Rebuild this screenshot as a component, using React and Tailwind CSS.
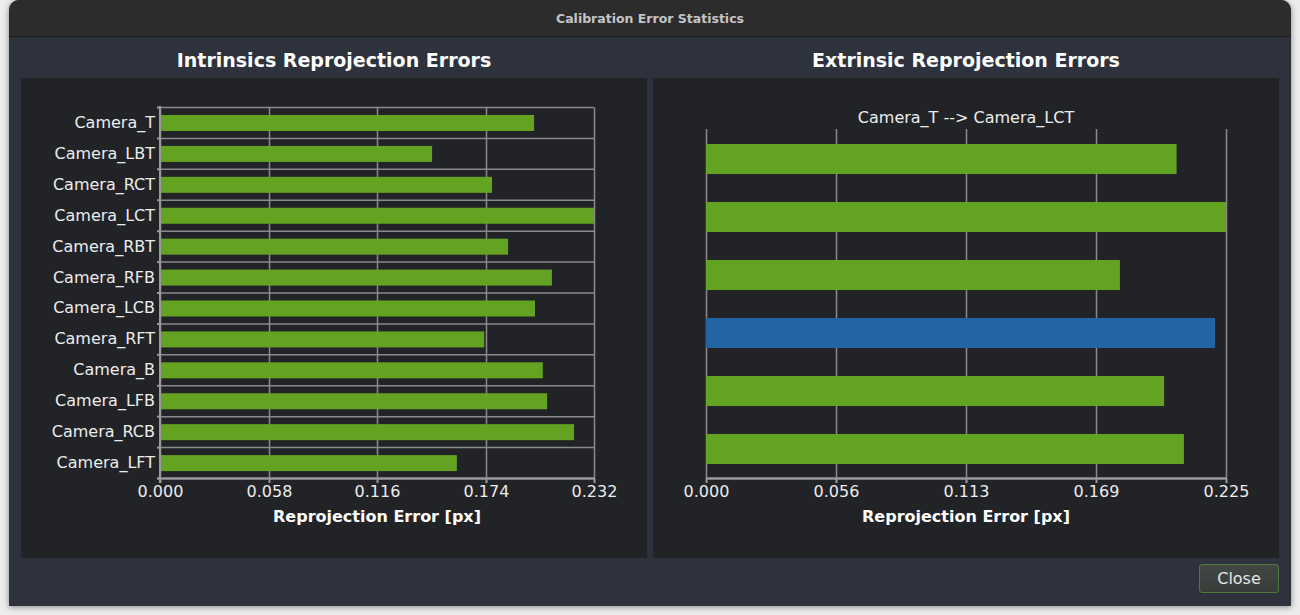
import React from "react";

const intrinsics = [
  { name: "Camera_T", value: 0.862 },
  { name: "Camera_LBT", value: 0.627 },
  { name: "Camera_RCT", value: 0.765 },
  { name: "Camera_LCT", value: 1.0 },
  { name: "Camera_RBT", value: 0.802 },
  { name: "Camera_RFB", value: 0.903 },
  { name: "Camera_LCB", value: 0.864 },
  { name: "Camera_RFT", value: 0.747 },
  { name: "Camera_B", value: 0.882 },
  { name: "Camera_LFB", value: 0.892 },
  { name: "Camera_RCB", value: 0.954 },
  { name: "Camera_LFT", value: 0.684 },
];

const extrinsics = [
  { value: 0.905, color: "#64a322" },
  { value: 1.0, color: "#64a322" },
  { value: 0.796, color: "#64a322" },
  { value: 0.979, color: "#2165a5" },
  { value: 0.881, color: "#64a322" },
  { value: 0.919, color: "#64a322" },
];

const GRID = "#8a8a8a";
const AXIS = "#9a9a9a";
const GREEN = "#64a322";
const TEXT = "#ececec";

function IntrinsicsChart() {
  const left = 139;
  const width = 434;
  const top = 29.5;
  const bottom = 400.5;
  const rowH = (bottom - top) / intrinsics.length;
  const ticks = ["0.000", "0.058", "0.116", "0.174", "0.232"];

  return (
    <svg width="626" height="480" className="block">
      {/* vertical grid */}
      {ticks.map((t, i) => {
        const x = Math.round(left + (width * i) / 4) + 0.5;
        return (
          <g key={t}>
            <line x1={x} y1={top} x2={x} y2={bottom} stroke={GRID} strokeWidth="1.5" />
            <line x1={x} y1={bottom} x2={x} y2={bottom + 4.5} stroke={AXIS} strokeWidth="2" />
            <text x={x} y={419} textAnchor="middle" fontSize="16" fill={TEXT}>
              {t}
            </text>
          </g>
        );
      })}

      {/* horizontal grid + left ticks */}
      {intrinsics.map((_, i) => {
        const y = top + rowH * i;
        return (
          <g key={i}>
            <line x1={left} y1={y} x2={left + width} y2={y} stroke={GRID} strokeWidth="1.5" />
            <line x1={left - 3} y1={y} x2={left} y2={y} stroke={AXIS} strokeWidth="2" />
          </g>
        );
      })}

      {/* bars */}
      {intrinsics.map((d, i) => {
        const y = top + rowH * i;
        return (
          <g key={d.name}>
            <rect x={left} y={y + 7.5} width={width * d.value} height="16" fill={GREEN} />
            <text x={134} y={y + rowH / 2 + 5} textAnchor="end" fontSize="16" fill={TEXT}>
              {d.name}
            </text>
          </g>
        );
      })}

      {/* axes */}
      <line x1={left} y1={top - 1.5} x2={left} y2={bottom + 4.5} stroke={AXIS} strokeWidth="2" />
      <line x1={left - 3} y1={bottom} x2={left + width + 1} y2={bottom} stroke={AXIS} strokeWidth="2.5" />

      <text x={left + width / 2} y={443.5} textAnchor="middle" fontSize="16" fontWeight="bold" fill="#ffffff">
        Reprojection Error [px]
      </text>
    </svg>
  );
}

function ExtrinsicsChart() {
  const left = 53;
  const width = 520;
  const top = 52;
  const bottom = 400.5;
  const rowH = 58;
  const ticks = ["0.000", "0.056", "0.113", "0.169", "0.225"];

  return (
    <svg width="626" height="480" className="block">
      <text x={313} y={44.5} textAnchor="middle" fontSize="16" fill={TEXT}>
        Camera_T --&gt; Camera_LCT
      </text>

      {ticks.map((t, i) => {
        const x = Math.round(left + (width * i) / 4) + 0.5;
        return (
          <g key={t}>
            <line x1={x} y1={51} x2={x} y2={bottom} stroke={GRID} strokeWidth="1.5" />
            <line x1={x} y1={bottom} x2={x} y2={bottom + 4.5} stroke={AXIS} strokeWidth="2" />
            <text x={x} y={419} textAnchor="middle" fontSize="16" fill={TEXT}>
              {t}
            </text>
          </g>
        );
      })}

      {extrinsics.map((d, i) => (
        <rect
          key={i}
          x={left}
          y={top + rowH * i + 14}
          width={width * d.value}
          height="30"
          fill={d.color}
        />
      ))}

      <line x1={left} y1={bottom} x2={left + width + 1} y2={bottom} stroke={AXIS} strokeWidth="2.5" />

      <text x={left + width / 2} y={443.5} textAnchor="middle" fontSize="16" fontWeight="bold" fill="#ffffff">
        Reprojection Error [px]
      </text>
    </svg>
  );
}

function ChartColumn({ title, children }) {
  return (
    <div className="flex flex-col w-[626px]">
      <div className="h-[41px] flex items-center justify-center pt-[5px] text-[19px] font-bold text-white">
        {title}
      </div>
      <div className="h-[480px] bg-[#222327]">{children}</div>
    </div>
  );
}

export default function App() {
  return (
    <div className="w-[1300px] h-[615px] bg-[#ededed] px-[9px] overflow-hidden font-['DejaVu_Sans',sans-serif]">
      <div className="w-[1282px] h-[606px] flex flex-col bg-[#2e323c] rounded-t-[10px] shadow-[0_1px_6px_rgba(0,0,0,0.45)] overflow-hidden">
        <div className="h-[37px] shrink-0 flex items-center justify-center pt-[2px] bg-[#2c2c2c] border-b border-[#1b1b1b] text-[12.5px] font-bold text-[#c4c4c4]">
          Calibration Error Statistics
        </div>

        <div className="flex-1 flex flex-col px-[12px]">
          <div className="flex gap-[6px]">
            <ChartColumn title="Intrinsics Reprojection Errors">
              <IntrinsicsChart />
            </ChartColumn>
            <ChartColumn title="Extrinsic Reprojection Errors">
              <ExtrinsicsChart />
            </ChartColumn>
          </div>

          <div className="flex justify-end pt-[6px]">
            <button className="w-[80px] h-[29px] rounded-[3px] border border-[#53763a] bg-gradient-to-b from-[#414843] to-[#383d3a] text-[16px] text-[#e6e6e6]">
              Close
            </button>
          </div>
        </div>
      </div>
    </div>
  );
}
